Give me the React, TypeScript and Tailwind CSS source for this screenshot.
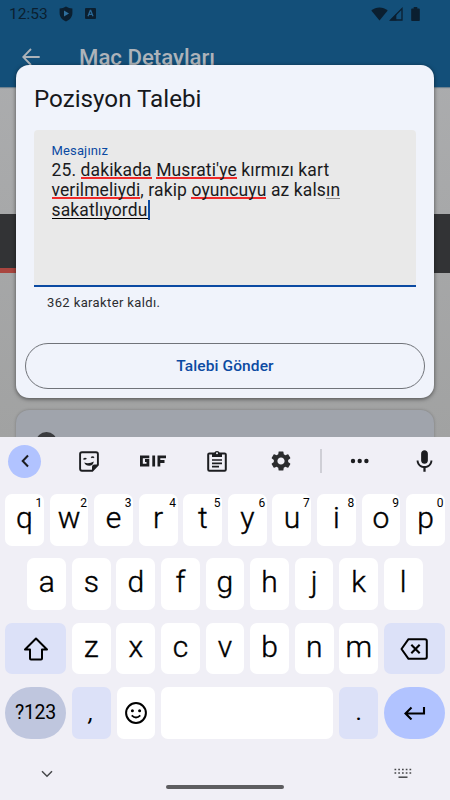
import type { ReactNode } from "react";
import { MdMic, MdSettings } from "react-icons/md";

const numberRow = [
  ["q", "1"],
  ["w", "2"],
  ["e", "3"],
  ["r", "4"],
  ["t", "5"],
  ["y", "6"],
  ["u", "7"],
  ["i", "8"],
  ["o", "9"],
  ["p", "0"],
];

const Key = ({
  children,
  className = "w-[38.8px] rounded-[7px] bg-white",
}: {
  children?: ReactNode;
  className?: string;
}) => (
  <button
    className={`relative flex h-[51.5px] shrink-0 items-center justify-center text-[30px] leading-none text-black ${className}`}
  >
    {children}
  </button>
);

const Letter = ({ value, hint }: { value: string; hint?: string }) => (
  <Key>
    <span className="-mt-[4px] font-light [-webkit-text-stroke:0.4px_#000]">
      {value}
    </span>
    {hint && (
      <span className="absolute right-[1.5px] top-[3px] text-[12px] leading-[13px]">
        {hint}
      </span>
    )}
  </Key>
);

const StatusBar = () => (
  <div className="flex h-[27px] items-center pl-[9px] pr-[30px] text-[#0b1f30]">
    <span className="pt-[1px] text-[15.5px] leading-[27px]">12:53</span>
    <svg className="ml-[11px]" width="14" height="16" viewBox="0 0 14 16">
      <path
        d="M7 .6C9 1.9 11 2.5 13.4 2.6V7c0 4-2.7 6.9-6.4 8.4C3.3 13.9.6 11 .6 7V2.6C3 2.5 5 1.9 7 .6Z"
        fill="currentColor"
      />
      <path d="M5 4.5v6L10 7.5Z" fill="#2f6f9d" />
    </svg>
    <svg className="ml-[12px]" width="11" height="11" viewBox="0 0 11 11">
      <rect width="11" height="11" rx="1" fill="currentColor" />
      <path
        d="M3 8.3 5.3 2.5h.4L8 8.3M3.9 6.4h3.2"
        fill="none"
        stroke="#2a6896"
        strokeWidth="1.3"
      />
    </svg>
    <svg className="ml-auto" width="17" height="14" viewBox="0 0 17 14">
      <path
        d="M.3 3.6C5-.7 12-.7 16.7 3.6L8.5 13.6Z"
        fill="currentColor"
      />
    </svg>
    <svg className="ml-[1px]" width="14" height="14" viewBox="0 0 14 14">
      <path
        d="M13 1.6V13H1.6Z"
        fill="none"
        stroke="currentColor"
        strokeWidth="1.3"
      />
      <path d="M7.3 7V13.4H1Z" fill="currentColor" />
    </svg>
    <svg className="ml-[8px]" width="9" height="14" viewBox="0 0 9 14">
      <path
        d="M2.7 0h3.6v1.4H8q.8 0 .8.8v11q0 .8-.8.8H1q-.8 0-.8-.8v-11q0-.8.8-.8h1.7Z"
        fill="currentColor"
      />
    </svg>
  </div>
);

const MatchPage = () => (
  <div className="flex h-[437px] flex-col overflow-hidden bg-gradient-to-b from-[#adaeb0] to-[#a1a2a2]">
    <header className="h-[87px] shrink-0 bg-[#134f79] shadow-[0_1px_1px_#6f8290]">
      <StatusBar />
      <div className="flex h-[60px] items-center pl-[22px] text-[#adb3b9]">
        <svg width="18" height="18" viewBox="0 0 18 18">
          <path
            d="M17.7 9H1.5M9 1 1.2 9 9 17"
            fill="none"
            stroke="currentColor"
            strokeWidth="1.8"
          />
        </svg>
        <h1 className="ml-[39px] mt-px text-[22.2px] font-medium leading-none">
          Maç Detayları
        </h1>
      </div>
    </header>
    <div className="mt-[127px] h-[59px] shrink-0 bg-[#323335]">
      <div className="mt-[54px] h-[5px] w-[112px] bg-[#a9453f]" />
    </div>
    <div className="mx-4 mt-[137px] h-[60px] shrink-0 rounded-t-[13px] bg-[#a0a4ac] pl-5 pt-[22px] shadow-[0_0_3px_rgba(0,0,0,0.25)]">
      <div className="h-[21px] w-[21px] rounded-full bg-[#3a3b3e]" />
    </div>
  </div>
);

const typo = "inline-block h-[19px] border-b-2 border-[#f02a2a]";

const RequestDialog = () => (
  <section className="absolute left-4 top-[65px] flex h-[333px] w-[418px] flex-col rounded-[13px] bg-[#f0f3fb] shadow-[0_1px_4px_rgba(0,0,0,0.55)]">
    <h2 className="pl-[18px] pt-[19px] text-[24.2px] leading-[30px] text-[#17181b]">
      Pozisyon Talebi
    </h2>
    <div className="mx-[18px] mt-4 h-[157px] rounded-t-[4px] border-b-[2.5px] border-[#0b4aa2] bg-[#e9e9e9] pl-[17.5px] pt-[13px]">
      <label className="block text-[13px] leading-[16px] tracking-[0.15px] text-[#0b4aa2]">
        Mesajınız
      </label>
      <div className="whitespace-nowrap pt-[0.6px] text-[17.5px] leading-[20.3px] tracking-[0.11px] text-[#1b1b1d]">
        <div className="h-[20.3px]">
          25. <span className={typo}>dakikada</span>{" "}
          <span className={typo}>Musrati'ye</span> kırmızı kart
        </div>
        <div className="h-[20.3px]">
          <span className={typo}>verilmeliydi</span>, rakip{" "}
          <span className={typo}>oyuncuyu</span> az kals
          <span className="inline-block h-[19px] border-b border-[#8a8a8a]">
            ın
          </span>
        </div>
        <div className="flex h-[20.3px]">
          <span className="h-[19px] border-b border-black">sakatlıyordu</span>
          <span className="h-[20px] w-[2px] bg-[#0b4aa2]" />
        </div>
      </div>
    </div>
    <p className="pl-[31px] pt-[8px] text-[13px] leading-[16px] tracking-[0.38px] text-[#2b2c30]">
      362 karakter kaldı.
    </p>
    <button className="mx-[9px] mt-auto mb-[9px] h-[46px] rounded-full border border-[#707379] pt-[2px] text-[15.5px] font-medium tracking-[0.1px] text-[#0b4aa2]">
      Talebi Gönder
    </button>
  </section>
);

const Toolbar = () => (
  <div className="flex h-[48px] items-center pl-2 pr-[16px] text-[#1c1d20]">
    <div className="flex h-[33px] w-[33px] items-center justify-center rounded-full bg-[#b1c3ff]">
      <svg width="8" height="14" viewBox="0 0 8 14">
        <path
          d="M7 1.5 1.7 7 7 12.5"
          fill="none"
          stroke="currentColor"
          strokeWidth="2"
        />
      </svg>
    </div>
    <svg className="ml-[38px]" width="20" height="21" viewBox="0 0 20 21">
      <path
        d="M3 1.2h14q1.9 0 1.9 1.9v10.7l-5.6 5.9H3q-1.9 0-1.9-1.9V3.1Q1.1 1.2 3 1.2Z"
        fill="none"
        stroke="currentColor"
        strokeWidth="1.9"
      />
      <path d="M13 20v-4q0-2.5 2.5-2.5H19Z" fill="currentColor" />
      <path
        d="M5.2 11.6q4.8 1.6 9.6-1-.6 4.2-4.6 4.2-3.6 0-5-3.2Z"
        fill="currentColor"
      />
      <path
        d="M4.6 8.5q1.3-1.7 2.7-.4M12.3 6.7q1.3-1.5 2.6 0"
        fill="none"
        stroke="currentColor"
        strokeWidth="1.6"
      />
    </svg>
    <svg className="ml-[41px]" width="27" height="12" viewBox="0 0 27 12">
      <path
        d="M9.3 1.9H1.4V10.1H7.9V5.5H5M13.7.5V11.5M18.9 11.5V1.9H26M18.9 6.5H24.5"
        fill="none"
        stroke="currentColor"
        strokeWidth="2.8"
      />
    </svg>
    <svg className="ml-[40px]" width="20" height="22" viewBox="0 0 20 22">
      <rect
        x="1.2"
        y="3.4"
        width="17.6"
        height="17.4"
        rx="1.2"
        fill="none"
        stroke="currentColor"
        strokeWidth="2"
      />
      <path d="M5 3h2.3a2.8 2.8 0 0 1 5.4 0H15v4H5Z" fill="currentColor" />
      <circle cx="10" cy="3.3" r="1" fill="#f0eff6" />
      <path
        d="M5 10h10M5 13.3h10M5 16.6h7"
        stroke="currentColor"
        strokeWidth="1.7"
      />
    </svg>
    <MdSettings className="ml-[42px] h-6 w-6 text-[#2b2c2e]" />
    <div className="ml-[27px] h-6 w-[1.5px] bg-[#cfcfd6]" />
    <svg className="ml-[28.5px]" width="20" height="6" viewBox="0 0 20 6">
      <circle cx="3" cy="3" r="2.2" fill="currentColor" />
      <circle cx="9.7" cy="3" r="2.2" fill="currentColor" />
      <circle cx="16.4" cy="3" r="2.2" fill="currentColor" />
    </svg>
    <MdMic className="ml-auto -mr-[4px] h-[27px] w-[27px]" />
  </div>
);

const Keyboard = () => (
  <div className="flex h-[363px] flex-col bg-[#f0eff6]">
    <Toolbar />
    <div className="mt-[9px] flex flex-col gap-[12.9px] px-[5px]">
      <div className="flex justify-between">
        {numberRow.map(([value, hint]) => (
          <Letter key={value} value={value} hint={hint} />
        ))}
      </div>
      <div className="flex justify-between px-[22.3px]">
        {"asdfghjkl".split("").map((value) => (
          <Letter key={value} value={value} />
        ))}
      </div>
      <div className="flex justify-between">
        <Key className="w-[61px] rounded-[7px] bg-[#dce1f8]">
          <svg width="26" height="24" viewBox="0 0 26 24">
            <path
              d="M13 1.5 2 12.5h5v9q0 1 1 1h10q1 0 1-1v-9h5Z"
              fill="none"
              stroke="currentColor"
              strokeWidth="2"
              strokeLinejoin="round"
            />
          </svg>
        </Key>
        {"zxcvbnm".split("").map((value) => (
          <Letter key={value} value={value} />
        ))}
        <Key className="w-[61px] rounded-[7px] bg-[#dce1f8]">
          <svg width="28" height="22" viewBox="0 0 28 22">
            <path
              d="M8.5 1.2H25q1.8 0 1.8 1.8v16q0 1.8-1.8 1.8H8.5L1.5 11Z"
              fill="none"
              stroke="currentColor"
              strokeWidth="2"
              strokeLinejoin="round"
            />
            <path
              d="m11.3 6.7 8.4 8.6m0-8.6-8.4 8.6"
              stroke="currentColor"
              strokeWidth="2.1"
            />
          </svg>
        </Key>
      </div>
      <div className="flex justify-between">
        <Key className="w-[61px] rounded-full bg-[#bfc6de]">
          <span className="text-[19.5px] tracking-[-0.3px]">?123</span>
        </Key>
        <Key className="w-[38.8px] rounded-[7px] bg-[#dce1f8]">
          <span className="mt-px text-[23px] italic">,</span>
        </Key>
        <Key>
          <svg width="22" height="22" viewBox="0 0 22 22">
            <circle
              cx="11"
              cy="11"
              r="9.9"
              fill="none"
              stroke="currentColor"
              strokeWidth="2"
            />
            <circle cx="7.4" cy="8.8" r="1.5" fill="currentColor" />
            <circle cx="14.6" cy="8.8" r="1.5" fill="currentColor" />
            <path
              d="M6.7 13.3q4.3 4.4 8.6 0"
              fill="none"
              stroke="currentColor"
              strokeWidth="1.8"
            />
          </svg>
        </Key>
        <Key className="w-[172px] rounded-[7px] bg-white" />
        <Key className="w-[38.8px] rounded-[7px] bg-[#dce1f8]">
          <span className="-mt-[2px] text-[24px]">.</span>
        </Key>
        <Key className="w-[61px] rounded-full bg-[#b1c3ff]">
          <svg width="22" height="14" viewBox="0 0 22 14">
            <path
              d="M20 1v6.5H2M7.5 1.5l-6 6 6 6"
              fill="none"
              stroke="currentColor"
              strokeWidth="2.1"
            />
          </svg>
        </Key>
      </div>
    </div>
    <div className="flex flex-1 items-center justify-between pl-[41px] pr-[38px] text-[#46474a]">
      <svg className="mt-[9px]" width="12" height="8" viewBox="0 0 12 8">
        <path
          d="m1 1.3 5 5 5-5"
          fill="none"
          stroke="currentColor"
          strokeWidth="1.5"
        />
      </svg>
      <div className="ml-[2px] mt-[36px] h-[4px] w-[118px] rounded-full bg-[#5d5d60]" />
      <svg className="mt-[9px]" width="18" height="11" viewBox="0 0 18 11">
        <path
          d="M.5 1.5h18M.5 5h18"
          stroke="currentColor"
          strokeWidth="1.6"
          strokeDasharray="1.7 2.05"
        />
        <path d="M4.5 9.2h9" stroke="currentColor" strokeWidth="1.5" />
      </svg>
    </div>
  </div>
);

const App = () => (
  <main className="relative h-[800px] w-[450px] overflow-hidden font-['Roboto',sans-serif]">
    <MatchPage />
    <RequestDialog />
    <Keyboard />
  </main>
);

export default App;
